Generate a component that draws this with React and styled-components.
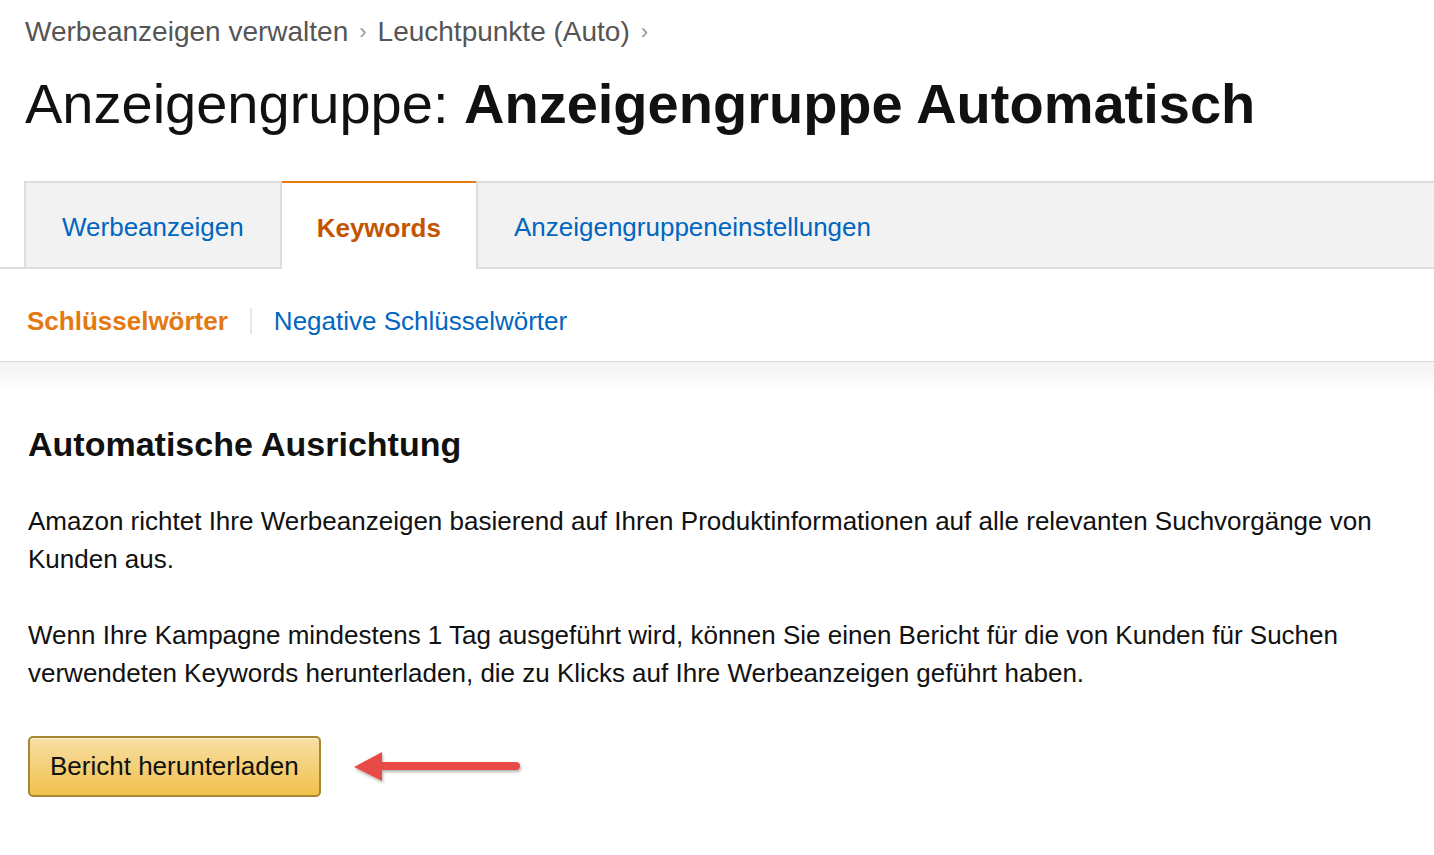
import React from "react";
import styled, { createGlobalStyle } from "styled-components";

const Global = createGlobalStyle`
  html, body { margin: 0; padding: 0; background: #fff; }
  body { font-family: "Liberation Sans", Arial, sans-serif; color: #111; }
  * { box-sizing: border-box; }
`;

const Page = styled.div`
  width: 1434px;
  min-height: 855px;
  overflow: hidden;
`;

const Header = styled.div`
  padding: 15px 0 0 25px;
`;

const Breadcrumb = styled.nav`
  font-size: 28px;
  line-height: 34px;
  color: #555;
  display: flex;
  align-items: center;
`;

const Chevron = styled.span`
  color: #999;
  font-size: 22px;
  margin: 0 11px;
`;

const Title = styled.h1`
  margin: 21px 0 0;
  font-size: 56px;
  line-height: 67px;
  font-weight: normal;
  color: #111;
  b { font-weight: bold; }
`;

const TabStrip = styled.div`
  margin-top: 44px;
  display: flex;
  padding-left: 24px;
  border-bottom: 2px solid #ddd;
`;

const Tab = styled.div`
  display: flex;
  align-items: center;
  padding: 4px ${(p) => (p.$active ? 35 : 36)}px 0;
  font-size: 26px;
  margin-bottom: ${(p) => (p.$active ? "-2px" : "0")};
  height: ${(p) => (p.$active ? "88px" : "86px")};
  background: ${(p) => (p.$active ? "#fff" : "#f2f2f2")};
  color: ${(p) => (p.$active ? "#c45500" : "#0066c0")};
  font-weight: ${(p) => (p.$active ? "bold" : "normal")};
  border-top: 2px solid ${(p) => (p.$active ? "#e47911" : "#ddd")};
  border-left: ${(p) => (p.$active ? "none" : "2px solid #ddd")};
  border-right: ${(p) => (p.$active || p.$grow ? "none" : "2px solid #ddd")};
  flex: ${(p) => (p.$grow ? 1 : "none")};
`;

const SubNav = styled.div`
  display: flex;
  align-items: center;
  padding: 37px 0 25px 27px;
  border-bottom: 1px solid #d8d8d8;
  font-size: 26px;
  line-height: 30px;
`;

const SubLink = styled.span`
  color: ${(p) => (p.$active ? "#e47911" : "#0066c0")};
  font-weight: ${(p) => (p.$active ? "bold" : "normal")};
`;

const Divider = styled.span`
  width: 2px;
  height: 26px;
  background: #e7e7e7;
  margin: 0 22px 0 22px;
`;

const Content = styled.section`
  background: linear-gradient(#f2f2f2, #ffffff 28px);
  padding: 62px 28px 40px 28px;
`;

const Heading = styled.h2`
  margin: 0;
  font-size: 34px;
  line-height: 40px;
  font-weight: bold;
  color: #111;
`;

const Para = styled.p`
  margin: 38px 0 0;
  font-size: 26px;
  line-height: 38px;
  color: #111;
`;

const ActionRow = styled.div`
  margin-top: 44px;
  display: flex;
  align-items: center;
  gap: 31px;
`;

const Button = styled.button`
  height: 61px;
  padding: 0 20px;
  font-family: inherit;
  font-size: 26px;
  color: #111;
  border: 2px solid #a88734;
  border-radius: 5px;
  background: linear-gradient(#f7dfa5, #f0c14b);
  box-shadow: inset 0 1px 0 rgba(255, 255, 255, 0.6);
  cursor: pointer;
`;

const Arrow = () => (
  <svg width="172" height="44" viewBox="0 0 172 44">
    <defs>
      <filter id="sh" x="-10%" y="-30%" width="120%" height="170%">
        <feDropShadow dx="1" dy="2" stdDeviation="1.5" floodColor="#000" floodOpacity="0.3" />
      </filter>
    </defs>
    <g filter="url(#sh)">
      <line x1="28" y1="21" x2="164" y2="21" stroke="#e84c47" strokeWidth="8" strokeLinecap="round" />
      <polygon points="2,22 30,7 30,36" fill="#e84c47" />
    </g>
  </svg>
);

export default function App() {
  return (
    <Page>
      <Global />
      <Header>
        <Breadcrumb>
          <span>Werbeanzeigen verwalten</span>
          <Chevron>›</Chevron>
          <span>Leuchtpunkte (Auto)</span>
          <Chevron>›</Chevron>
        </Breadcrumb>
        <Title>
          Anzeigengruppe: <b>Anzeigengruppe Automatisch</b>
        </Title>
      </Header>
      <TabStrip>
        <Tab>Werbeanzeigen</Tab>
        <Tab $active>Keywords</Tab>
        <Tab $grow>Anzeigengruppeneinstellungen</Tab>
      </TabStrip>
      <SubNav>
        <SubLink $active>Schlüsselwörter</SubLink>
        <Divider />
        <SubLink>Negative Schlüsselwörter</SubLink>
      </SubNav>
      <Content>
        <Heading>Automatische Ausrichtung</Heading>
        <Para>
          Amazon richtet Ihre Werbeanzeigen basierend auf Ihren Produktinformationen auf alle relevanten Suchvorgänge von Kunden aus.
        </Para>
        <Para>
          Wenn Ihre Kampagne mindestens 1 Tag ausgeführt wird, können Sie einen Bericht für die von Kunden für Suchen verwendeten Keywords herunterladen, die zu Klicks auf Ihre Werbeanzeigen geführt haben.
        </Para>
        <ActionRow>
          <Button>Bericht herunterladen</Button>
          <Arrow />
        </ActionRow>
      </Content>
    </Page>
  );
}
